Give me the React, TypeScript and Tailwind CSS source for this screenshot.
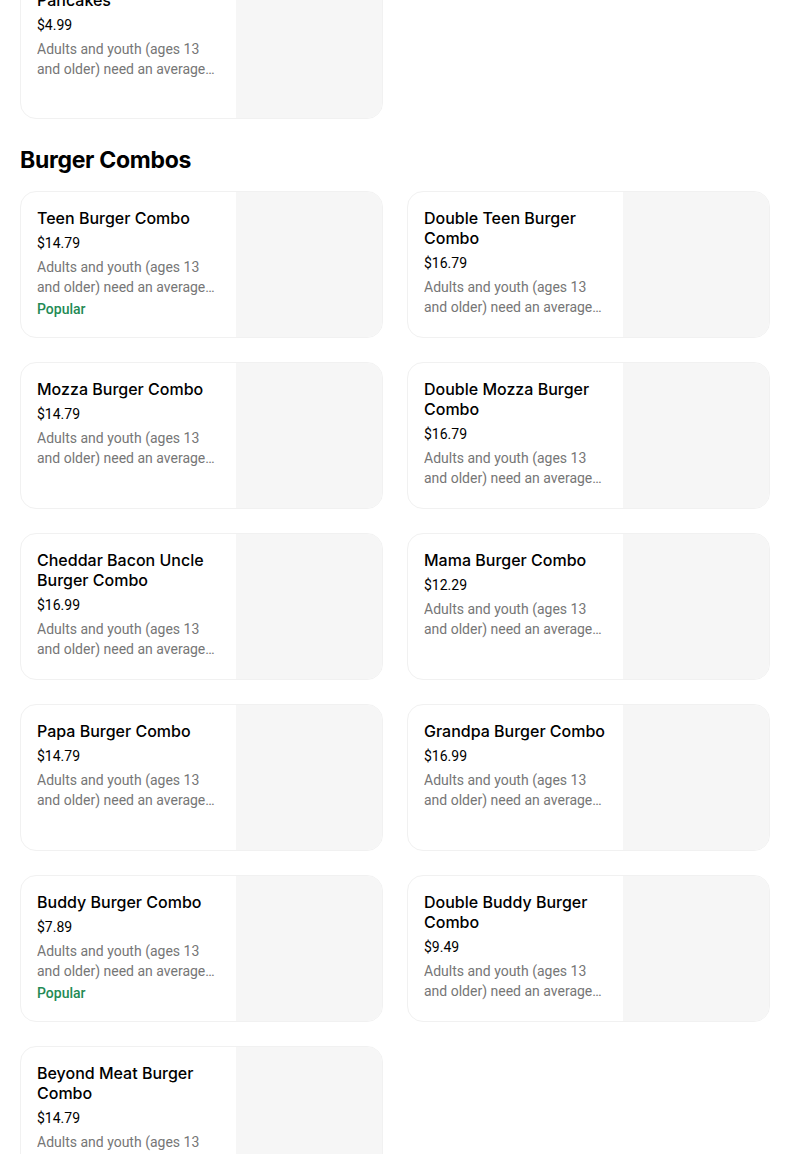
import React from "react";

type Item = {
  name: string;
  price: string;
  popular?: boolean;
};

const DESC =
  "Adults and youth (ages 13 and older) need an average of 2,000 calories a day, and children (ages 2 to 12) need an average of 1,500 calories a day.";

const combos: Item[] = [
  { name: "Teen Burger Combo", price: "$14.79", popular: true },
  { name: "Double Teen Burger Combo", price: "$16.79" },
  { name: "Mozza Burger Combo", price: "$14.79" },
  { name: "Double Mozza Burger Combo", price: "$16.79" },
  { name: "Cheddar Bacon Uncle Burger Combo", price: "$16.99" },
  { name: "Mama Burger Combo", price: "$12.29" },
  { name: "Papa Burger Combo", price: "$14.79" },
  { name: "Grandpa Burger Combo", price: "$16.99" },
  { name: "Buddy Burger Combo", price: "$7.89", popular: true },
  { name: "Double Buddy Burger Combo", price: "$9.49" },
  { name: "Beyond Meat Burger Combo", price: "$14.79" },
];

function ItemCard({ item, tall }: { item: Item; tall?: boolean }) {
  return (
    <div
      className={`flex overflow-hidden rounded-2xl border border-[#f1f1f1] bg-white ${
        tall ? "h-[166px]" : "h-[147px]"
      }`}
    >
      <div className="flex-1 min-w-0 px-4 pt-4">
        <div
          className="text-base leading-5 font-medium text-black"
          style={{ fontFamily: "Inter, sans-serif" }}
        >
          {item.name}
        </div>
        <div className="mt-[5px] text-sm leading-5 text-black">{item.price}</div>
        <div className="mt-1 text-sm leading-5 text-[#767676] line-clamp-2">{DESC}</div>
        {item.popular && (
          <div className="mt-[2px] text-sm leading-5 font-medium text-[#238a54]">Popular</div>
        )}
      </div>
      {/* image placeholder */}
      <div className="w-[146px] shrink-0 bg-[#f6f6f6]"></div>
    </div>
  );
}

export default function App() {
  return (
    <div
      className="min-h-screen bg-white overflow-hidden"
      style={{ fontFamily: "Roboto, 'Noto Sans', sans-serif" }}
    >
      <div className="w-[770px] pl-5">
        {/* tail of the previous section */}
        <div className="-mt-[47px] grid grid-cols-2 gap-6">
          <ItemCard item={{ name: "Grandpa's Buttermilk Pancakes", price: "$4.99" }} tall />
        </div>

        <h2
          className="mt-[25px] mb-[15px] text-[23px] leading-8 font-bold tracking-[-0.3px] text-black"
          style={{ fontFamily: "Inter, sans-serif" }}
        >
          Burger Combos
        </h2>

        <div className="grid grid-cols-2 gap-6">
          {combos.map((c) => (
            <ItemCard key={c.name} item={c} />
          ))}
        </div>
      </div>
    </div>
  );
}
